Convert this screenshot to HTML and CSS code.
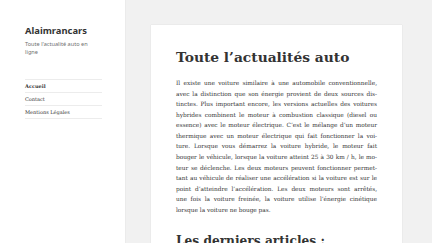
FILE: index.html
```html
<!DOCTYPE html>
<html lang="fr">
<head>
<meta charset="utf-8">
<title>Alaimrancars</title>
<link rel="stylesheet" href="styles.css">
</head>
<body>
<aside class="sidebar">
  <div class="site-title">Alaimrancars</div>
  <p class="tagline">Toute l'actualité auto en ligne</p>
  <nav class="menu">
    <a class="menu-item current" href="#">Accueil</a>
    <a class="menu-item" href="#">Contact</a>
    <a class="menu-item" href="#">Mentions Légales</a>
  </nav>
</aside>
<main class="main">
  <article class="card">
    <h1 class="entry-title">Toute l’actualités auto</h1>
    <p class="entry-text">
      <span class="ln">Il existe une voiture similaire à une automobile conventionnelle,</span>
      <span class="ln">avec la distinction que son énergie provient de deux sources dis-</span>
      <span class="ln">tinctes. Plus important encore, les versions actuelles des voitures</span>
      <span class="ln">hybrides combinent le moteur à combustion classique (diesel ou</span>
      <span class="ln">essence) avec le moteur électrique. C’est le mélange d’un moteur</span>
      <span class="ln">thermique avec un moteur électrique qui fait fonctionner la voi-</span>
      <span class="ln">ture. Lorsque vous démarrez la voiture hybride, le moteur fait</span>
      <span class="ln">bouger le véhicule, lorsque la voiture atteint 25 à 30 km / h, le mo-</span>
      <span class="ln">teur se déclenche. Les deux moteurs peuvent fonctionner permet-</span>
      <span class="ln">tant au véhicule de réaliser une accélération si la voiture est sur le</span>
      <span class="ln">point d’atteindre l’accélération. Les deux moteurs sont arrêtés,</span>
      <span class="ln">une fois la voiture freinée, la voiture utilise l’énergie cinétique</span>
      <span class="ln last">lorsque la voiture ne bouge pas.</span>
    </p>
    <h2 class="section-title">Les derniers articles :</h2>
  </article>
</main>
</body>
</html>
```

FILE: styles.css
```css
html, body {
  margin: 0;
  padding: 0;
}
body {
  background: #f1f1f1;
  display: flex;
  align-items: stretch;
  height: 243px;
  overflow: hidden;
  color: #333;
}
.sidebar {
  width: 125px;
  flex: none;
  box-sizing: border-box;
  background: #fff;
  box-shadow: 0 0 1px rgba(0, 0, 0, 0.15);
  padding: 25px 23px 0 25px;
}
.site-title {
  font-family: "Noto Sans", sans-serif;
  font-weight: 700;
  font-size: 9.4px;
  line-height: 12px;
  color: #333;
}
.tagline {
  font-family: "Noto Sans", sans-serif;
  font-size: 5.6px;
  line-height: 8px;
  color: #707070;
  margin: 3px 0 0;
  max-width: 70px;
}
.menu {
  margin-top: 23px;
  border-top: 1px solid #ececec;
  display: flex;
  flex-direction: column;
}
.menu-item {
  font-family: "DejaVu Serif", serif;
  font-size: 5px;
  line-height: 12px;
  color: #333;
  text-decoration: none;
  border-bottom: 1px solid #ececec;
}
.menu-item.current {
  font-weight: 700;
}
.main {
  padding: 25px 0 0 26px;
  flex: none;
}
.card {
  width: 251px;
  box-sizing: border-box;
  min-height: 260px;
  background: #fff;
  box-shadow: 0 0 1px rgba(0, 0, 0, 0.15);
  padding: 24px 25px 0;
}
.entry-title {
  font-family: "DejaVu Serif", serif;
  font-weight: 700;
  font-size: 13.8px;
  line-height: 16px;
  margin: 0 0 13px;
  color: #333;
}
.entry-text {
  font-family: "DejaVu Serif", serif;
  font-size: 5.8px;
  line-height: 10.58px;
  margin: 0;
  color: #333;
}
.ln {
  display: block;
  text-align: justify;
  text-align-last: justify;
}
.ln.last {
  text-align-last: left;
}
.section-title {
  font-family: "DejaVu Serif", serif;
  font-weight: 700;
  font-size: 12.2px;
  line-height: 16px;
  margin: 17px 0 0;
  color: #333;
}
```
